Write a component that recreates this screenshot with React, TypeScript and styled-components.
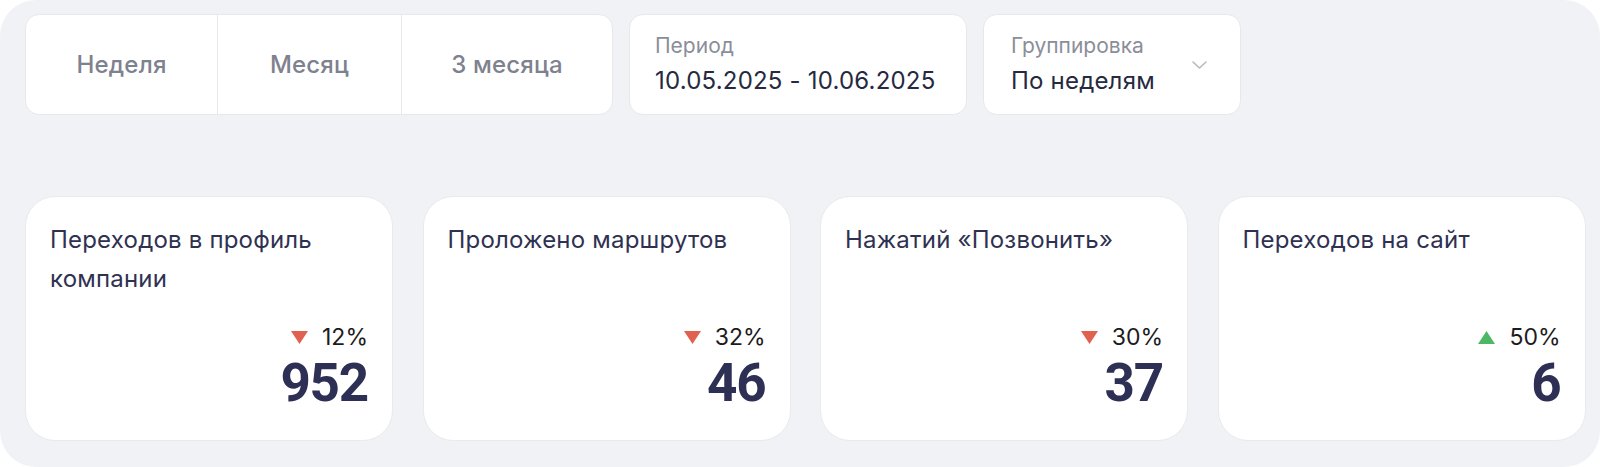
import React from "react";
import styled, { createGlobalStyle } from "styled-components";

const GlobalStyle = createGlobalStyle`
  html, body { margin: 0; padding: 0; background: #ffffff; }
  body { font-family: Inter, "Noto Sans", sans-serif; -webkit-font-smoothing: antialiased; }
  * { box-sizing: border-box; }
`;

const Panel = styled.div`
  width: 1600px;
  height: 467px;
  background: #f1f2f6;
  border-radius: 36px;
  padding: 14px 16px 0 25px;
  display: flex;
  flex-direction: column;
  gap: 81px;
`;

const Toolbar = styled.div`
  display: flex;
  gap: 16px;
  height: 101px;
`;

const Segmented = styled.div`
  display: flex;
  background: #ffffff;
  border: 1px solid #e7e8ec;
  border-radius: 14px;
  overflow: hidden;
`;

const Segment = styled.button<{ $w: number }>`
  width: ${(p) => p.$w}px;
  border: 0;
  background: transparent;
  font-family: inherit;
  font-size: 24px;
  font-weight: 500;
  letter-spacing: 0.2px;
  color: #7e818e;
  cursor: pointer;
  & + & {
    border-left: 1px solid #e7e8ec;
  }
`;

const Field = styled.div<{ $w: number; $pl: number }>`
  width: ${(p) => p.$w}px;
  background: #ffffff;
  border: 1px solid #e7e8ec;
  border-radius: 14px;
  display: flex;
  align-items: center;
  padding: 0 32px 0 ${(p) => p.$pl}px;
`;

const FieldText = styled.div`
  display: flex;
  flex-direction: column;
  gap: 6px;
  white-space: nowrap;
`;

const FieldLabel = styled.span`
  font-size: 21px;
  line-height: 26px;
  color: #8b8e99;
`;

const FieldValue = styled.span`
  font-size: 24px;
  line-height: 32px;
  letter-spacing: 0.2px;
  color: #262940;
`;

const Chevron = styled.svg`
  margin-left: auto;
  flex: none;
`;

const Cards = styled.div`
  display: grid;
  grid-template-columns: repeat(4, 368px);
  column-gap: 29.5px;
`;

const Card = styled.div`
  height: 245px;
  background: #ffffff;
  border: 1px solid #e9eaee;
  border-radius: 30px;
  padding: 23px 24px 31px 24px;
  display: flex;
  flex-direction: column;
`;

const Title = styled.div`
  font-size: 24px;
  line-height: 39px;
  letter-spacing: 0.2px;
  color: #2f3152;
  max-width: 310px;
`;

const Stats = styled.div`
  margin-top: auto;
  display: flex;
  flex-direction: column;
  align-items: flex-end;
`;

const Delta = styled.div`
  display: flex;
  align-items: center;
  gap: 14px;
  font-size: 23px;
  line-height: 28px;
  color: #1c1c20;
`;

const Value = styled.div`
  margin-top: 6px;
  font-family: Roboto, Inter, sans-serif;
  font-size: 53px;
  line-height: 52px;
  font-weight: 700;
  letter-spacing: -1.2px;
  color: #2d2f54;
`;

type Metric = { title: string; delta: number; up: boolean; value: string };

const metrics: Metric[] = [
  { title: "Переходов в профиль компании", delta: 12, up: false, value: "952" },
  { title: "Проложено маршрутов", delta: 32, up: false, value: "46" },
  { title: "Нажатий «Позвонить»", delta: 30, up: false, value: "37" },
  { title: "Переходов на сайт", delta: 50, up: true, value: "6" },
];

const Triangle = ({ up }: { up: boolean }) => (
  <svg width="17" height="13" viewBox="0 0 17 13">
    {up ? (
      <path d="M8.5 0 L17 13 H0 Z" fill="#4cb865" />
    ) : (
      <path d="M0 0 H17 L8.5 13 Z" fill="#e2604f" />
    )}
  </svg>
);

export default function App() {
  return (
    <>
      <GlobalStyle />
      <Panel>
        <Toolbar>
          <Segmented>
            <Segment $w={191}>Неделя</Segment>
            <Segment $w={184}>Месяц</Segment>
            <Segment $w={211}>3 месяца</Segment>
          </Segmented>
          <Field $w={338} $pl={25}>
            <FieldText>
              <FieldLabel>Период</FieldLabel>
              <FieldValue>10.05.2025 - 10.06.2025</FieldValue>
            </FieldText>
          </Field>
          <Field $w={258} $pl={27}>
            <FieldText>
              <FieldLabel>Группировка</FieldLabel>
              <FieldValue>По неделям</FieldValue>
            </FieldText>
            <Chevron width="17" height="10" viewBox="0 0 17 10">
              <path d="M2 2 L8.5 8 L15 2" fill="none" stroke="#b7b9c2" strokeWidth="1.6" strokeLinecap="round" strokeLinejoin="round" />
            </Chevron>
          </Field>
        </Toolbar>
        <Cards>
          {metrics.map((m) => (
            <Card key={m.title}>
              <Title>{m.title}</Title>
              <Stats>
                <Delta>
                  <Triangle up={m.up} />
                  {m.delta}%
                </Delta>
                <Value>{m.value}</Value>
              </Stats>
            </Card>
          ))}
        </Cards>
      </Panel>
    </>
  );
}
